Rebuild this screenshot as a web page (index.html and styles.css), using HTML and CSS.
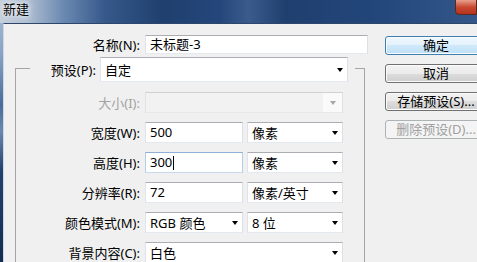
FILE: index.html
```html
<!DOCTYPE html>
<html lang="zh-CN">

<head>
	<meta charset="UTF-8">
	<meta name="viewport" content="width=device-width, initial-scale=1.0">
	<title>新建</title>
	<link rel="stylesheet" href="styles.css">
</head>

<body>
	<div class="window">
		<div class="titlebar">
			<span class="title">新建</span>
			<span class="close"></span>
		</div>
		<div class="client">
			<div class="form">
				<div class="row name-row">
					<span class="label name-label">名称(N):</span>
					<span class="field name-field">未标题-3</span>
				</div>
				<fieldset class="group">
					<legend class="preset">
						<span class="label preset-label">预设(P):</span>
						<span class="combo preset-combo"><span class="value">自定</span><i class="arrow"></i></span>
					</legend>
					<div class="rows">
						<div class="row">
							<span class="label group-label disabled">大小(I):</span>
							<span class="combo wide combo-disabled"><span class="value"></span><span class="drop"><i class="arrow"></i></span></span>
						</div>
						<div class="row">
							<span class="label group-label">宽度(W):</span>
							<div class="pair">
								<span class="field half">500</span>
								<span class="combo unit"><span class="value">像素</span><i class="arrow"></i></span>
							</div>
						</div>
						<div class="row">
							<span class="label group-label">高度(H):</span>
							<div class="pair">
								<span class="field half focused">300<span class="caret"></span></span>
								<span class="combo unit"><span class="value">像素</span><i class="arrow"></i></span>
							</div>
						</div>
						<div class="row">
							<span class="label group-label">分辨率(R):</span>
							<div class="pair">
								<span class="field half">72</span>
								<span class="combo unit"><span class="value">像素/英寸</span><i class="arrow"></i></span>
							</div>
						</div>
						<div class="row">
							<span class="label group-label">颜色模式(M):</span>
							<div class="pair">
								<span class="combo half"><span class="value">RGB 颜色</span><i class="arrow"></i></span>
								<span class="combo unit"><span class="value">8 位</span><i class="arrow"></i></span>
							</div>
						</div>
						<div class="row">
							<span class="label group-label">背景内容(C):</span>
							<span class="combo wide"><span class="value">白色</span><i class="arrow"></i></span>
						</div>
					</div>
				</fieldset>
			</div>
			<div class="buttons">
				<span class="btn btn-default">确定</span>
				<span class="btn">取消</span>
				<span class="btn">存储预设(S)...</span>
				<span class="btn btn-disabled">删除预设(D)...</span>
			</div>
		</div>
	</div>
</body>

</html>
```

FILE: styles.css
```css
* {
	box-sizing: border-box;
}

html,
body {
	margin: 0;
	width: 477px;
	height: 262px;
	overflow: hidden;
}

body {
	font-family: "Noto Sans", "Noto Sans CJK SC", sans-serif;
	font-size: 13px;
	color: #000;
}

.window {
	height: 262px;
	display: flex;
	flex-direction: column;
	background: linear-gradient(to bottom, #a9bbd2 0, #8aa4c6 20%, #4a6c9a 40%, #6a88ae 50%, #23416e 65%, #142c52 100%);
}

/* title bar */
.titlebar {
	flex: none;
	height: 23px;
	display: flex;
	align-items: flex-start;
	justify-content: space-between;
	background: linear-gradient(to right, #c4cfdd 0, #aebdd1 6%, #6d8bb3 13%, #36598b 22%, #1f406f 34%, #24467a 46%, #3a5b8c 52%, #1f3f6f 60%, #23467a 78%, #34578a 100%);
}

.title {
	padding: 1px 0 0 3px;
	line-height: 17px;
	text-shadow: 0 0 4px #fff, 0 0 8px #fff;
}

.close {
	width: 22px;
	height: 16px;
	margin-top: -1px;
	border: 1px solid #5a2a22;
	border-radius: 0 0 0 4px;
	background: linear-gradient(#e9a090, #c84a32 50%, #b3321d);
}

/* dialog body */
.client {
	flex: 1;
	margin-left: 3px;
	display: flex;
	background: #f0f0f0;
	border-top: 1px solid #2f466c;
	border-left: 1px solid #cdd8e5;
}

.form {
	width: 381px;
	flex: none;
	padding-top: 11px;
}

.row {
	display: flex;
	align-items: center;
	gap: 5px;
}

.label {
	text-align: right;
	line-height: 16px;
	white-space: nowrap;
}

.label.disabled {
	color: #a3a3a3;
}

.name-label {
	width: 136px;
}

.field,
.combo {
	height: 21px;
	background: #fff;
	border: 1px solid;
	border-color: #abadb3 #dbdfe6 #e3e9ef #e2e3ea;
	padding-left: 4px;
	line-height: 18px;
	white-space: nowrap;
}

.name-field {
	width: 223px;
	height: 19px;
	line-height: 16px;
}

.field.focused {
	border-color: #8fb0d6 #b6cde6 #c5d8ec #b6cde6;
}

.caret {
	display: inline-block;
	width: 1px;
	height: 14px;
	margin-left: 1px;
	background: #000;
	vertical-align: -3px;
}

/* group box with preset legend */
.group {
	margin: 0 0 0 11px;
	padding: 0;
	width: 350px;
	height: 260px;
	min-width: 0;
	border: 1px solid #a5a5a5;
}

.preset {
	margin-left: 14px;
	padding: 3px 7px 0 0;
	display: flex;
	align-items: center;
	gap: 4px;
}

.preset-label {
	width: 66px;
}

.combo {
	display: flex;
	align-items: center;
}

.combo .value {
	flex: 1;
}

.arrow {
	width: 0;
	height: 0;
	margin-right: 4px;
	border-left: 3.5px solid transparent;
	border-right: 3.5px solid transparent;
	border-top: 4px solid #000;
}

.preset-combo {
	width: 248px;
	height: 25px;
}

.rows {
	padding-top: 10px;
	display: flex;
	flex-direction: column;
	gap: 9px;
}

.group-label {
	width: 124px;
}

.wide {
	width: 198px;
}

.pair {
	display: flex;
	gap: 4px;
}

.half {
	width: 98px;
}

.unit {
	width: 96px;
}

.combo-disabled {
	padding-left: 0;
	background: #f2f2f2;
	border-color: #cfd1d4 #e0e2e5 #e6e8ea #e0e2e5;
}

.drop {
	width: 19px;
	height: 100%;
	display: flex;
	align-items: center;
	justify-content: center;
	background: #fafafa;
}

.drop .arrow {
	margin: 0;
	border-top-color: #a8a8a8;
}

/* buttons */
.buttons {
	padding-top: 12px;
	display: flex;
	flex-direction: column;
	gap: 9px;
}

.btn {
	width: 102px;
	height: 19px;
	border: 1px solid #707070;
	border-radius: 3px;
	background: linear-gradient(#f2f2f2 0, #ebebeb 50%, #dddddd 50%, #cfcfcf 100%);
	box-shadow: inset 0 0 0 1px #fbfbfb;
	text-align: center;
	line-height: 16px;
	white-space: nowrap;
}

.btn-default {
	border-color: #3c7fb1;
	background: linear-gradient(#eef7fd 0, #e2f2fc 50%, #cfe9fa 50%, #bfe0f6 100%);
}

.btn-disabled {
	border-color: #adb2b5;
	background: #f4f4f4;
	box-shadow: none;
	color: #a0a0a0;
}
```
